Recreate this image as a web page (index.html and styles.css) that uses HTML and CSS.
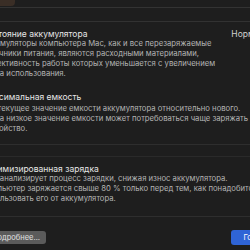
FILE: index.html
```html
<!DOCTYPE html>
<html>

<head>
    <title>Аккумулятор</title>
    <meta charset="utf-8" />
    <link rel="stylesheet" href="styles.css">
</head>

<body>
    <div class="window">
        <div class="toolbar">
            <span class="badge"></span>
        </div>
        <div class="tabs"></div>

        <div class="panel">
            <div class="item first">
                <div class="itemHead">
                    <span class="title">Состояние аккумулятора</span>
                    <span class="value">Нормальное</span>
                </div>
                <p class="desc">Аккумуляторы компьютера Mac, как и все перезаряжаемые<br>источники питания, являются расходными материалами,<br>эффективность работы которых уменьшается с увеличением<br>срока использования.</p>
            </div>

            <div class="item second">
                <div class="itemHead">
                    <span class="title">Максимальная емкость</span>
                </div>
                <p class="desc">Это текущее значение емкости аккумулятора относительно нового.<br>Когда низкое значение емкости может потребоваться чаще заряжать<br>устройство.</p>
            </div>

            <div class="item third">
                <div class="itemHead">
                    <span class="title">Оптимизированная зарядка</span>
                </div>
                <p class="desc">Mac анализирует процесс зарядки, снижая износ аккумулятора.<br>Компьютер заряжается свыше 80 % только перед тем, как понадобится<br>использовать его от аккумулятора.</p>
            </div>
        </div>

        <div class="footer">
            <button class="more">Подробнее…</button>
            <button class="done">Готово</button>
        </div>
    </div>
</body>

</html>
```

FILE: styles.css
```css
html,
body {
    margin: 0;
    width: 250px;
    height: 250px;
    overflow: hidden;
    background-color: #1e1e1e;
}

div.window {
    margin-left: -18px;
    width: 300px;
    font-family: Inter, "Liberation Sans", sans-serif;
    color: #d8d8d8;
}

div.toolbar {
    height: 7px;
    border-bottom: 1px solid #333333;
}

span.badge {
    display: block;
    width: 33px;
    height: 6px;
    background-color: #3a2e26;
    border-radius: 0 0 4px 0;
}

div.tabs {
    height: 13px;
    border-bottom: 1px solid #323232;
}

div.panel {
    padding-top: 6px;
}

div.item.second {
    margin-top: 12px;
    padding-bottom: 10px;
    border-bottom: 1px solid #2e2e2e;
}

div.item.third {
    margin-top: 11px;
    padding-top: 6px;
    padding-bottom: 12px;
    border-top: 1px solid #2a2a2a;
    border-bottom: 1px solid #2e2e2e;
}

div.itemHead {
    display: flex;
    justify-content: space-between;
    align-items: center;
    height: 11px;
}

span.title {
    font-size: 8.5px;
    color: #e6e6e6;
}

span.value {
    font-size: 8.5px;
    color: #d0d0d0;
    margin-right: -2px;
}

p.desc {
    margin: 0;
    font-size: 7.7px;
    line-height: 10px;
    color: #b4b4b4;
}

div.second p.desc {
    margin-top: 2px;
}

div.footer {
    display: flex;
    justify-content: space-between;
    align-items: center;
    margin-top: 13px;
}

button.more {
    font-family: Inter, "Liberation Sans", sans-serif;
    font-size: 7.5px;
    color: #e0e0e0;
    background-color: #5b5b5b;
    border: none;
    border-radius: 3px;
    height: 13px;
    padding: 0 6px 0 10px;
}

button.done {
    font-family: Inter, "Liberation Sans", sans-serif;
    font-size: 7.5px;
    color: #ffffff;
    background-color: #2f64d6;
    border: none;
    border-radius: 3px;
    height: 15px;
    width: 50px;
    transform: translateX(-1px);
}
```
